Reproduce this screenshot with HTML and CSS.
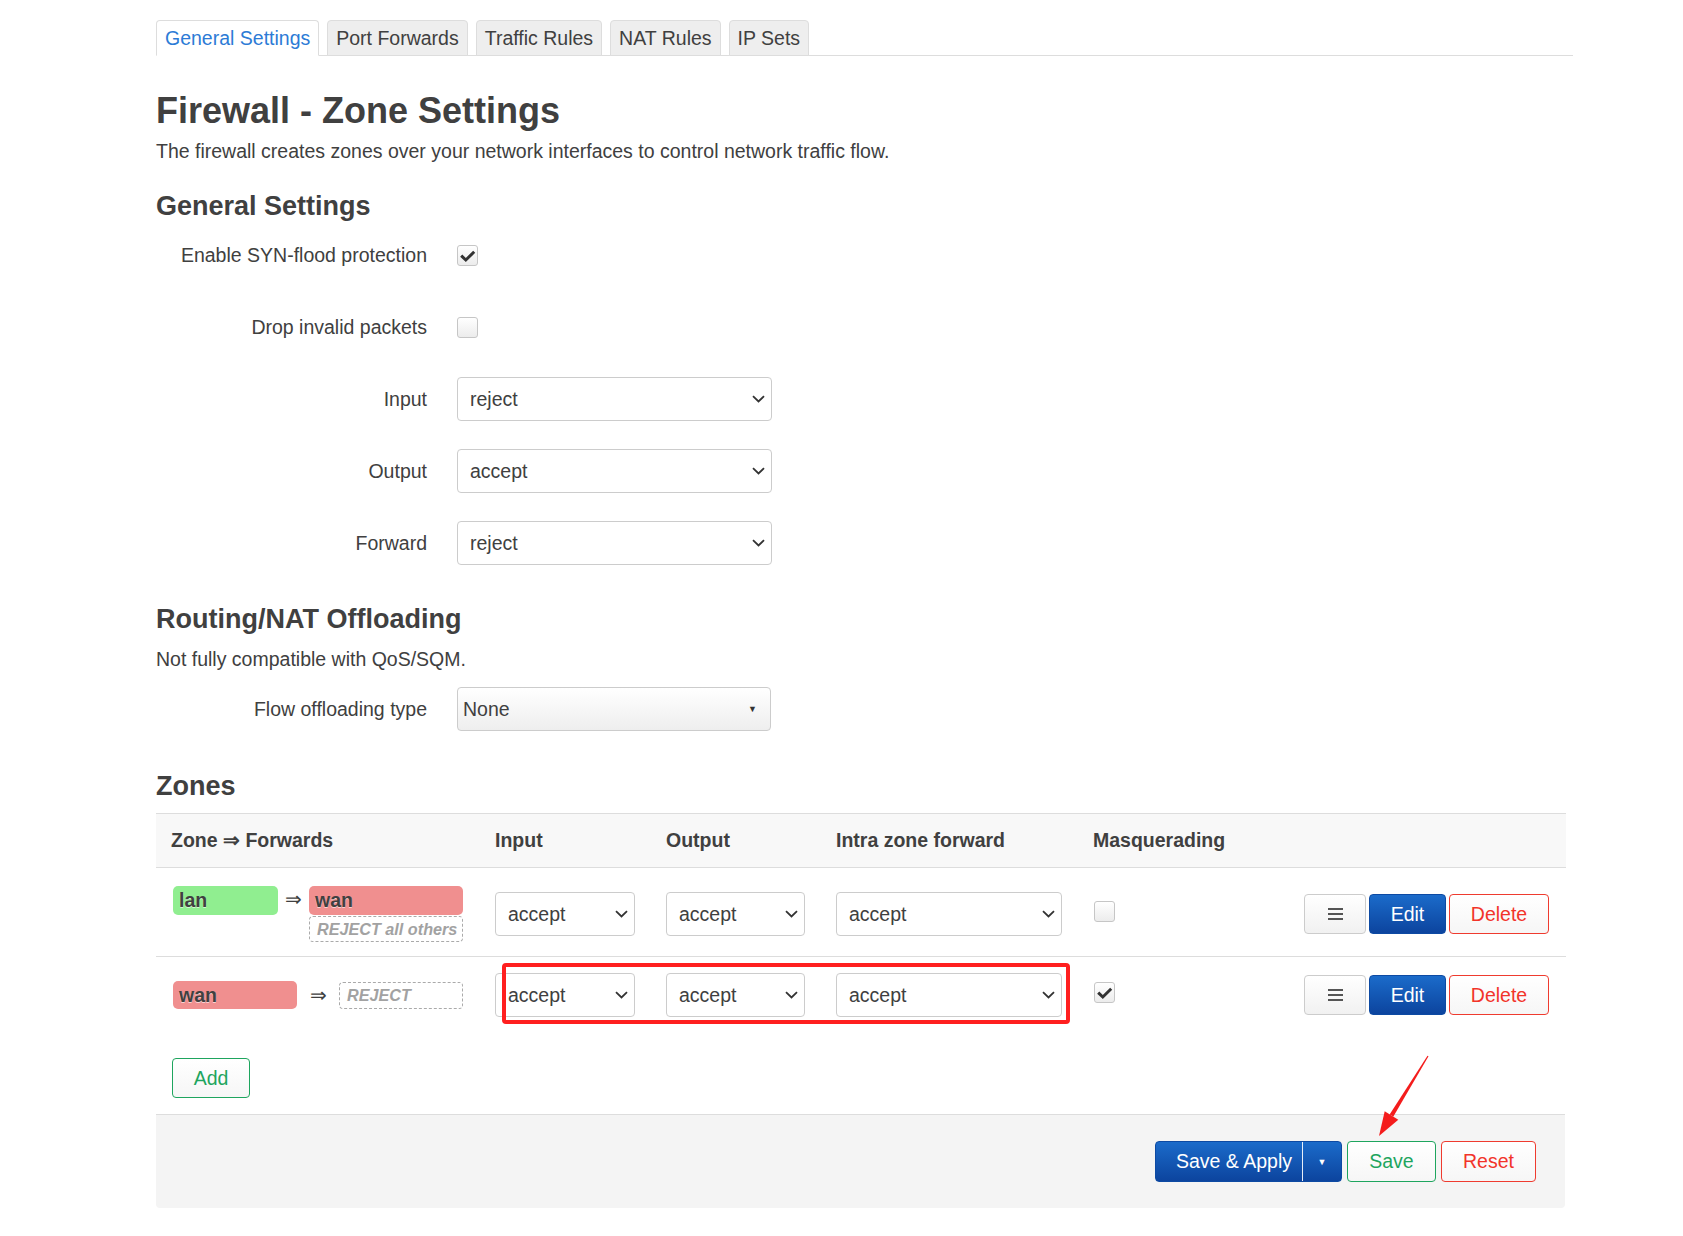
FILE: index.html
```html
<!DOCTYPE html>
<html>
<head>
<meta charset="utf-8">
<title>Firewall - Zone Settings</title>
<link rel="stylesheet" href="styles.css">
</head>
<body>
<div class="page">
  <ul class="tabs">
    <li class="tab active">General Settings</li>
    <li class="tab">Port Forwards</li>
    <li class="tab">Traffic Rules</li>
    <li class="tab">NAT Rules</li>
    <li class="tab">IP Sets</li>
  </ul>

  <h2 class="title">Firewall - Zone Settings</h2>
  <p class="desc">The firewall creates zones over your network interfaces to control network traffic flow.</p>

  <h3 class="section sec-general">General Settings</h3>
  <div class="fields">
    <div class="field">
      <div class="label">Enable SYN-flood protection</div>
      <span class="cb"><svg viewBox="0 0 21 21" width="21" height="21"><path d="M4.2 10.6 L8.8 15 L17.2 6.8" fill="none" stroke="#333" stroke-width="3" stroke-linejoin="miter"/></svg></span>
    </div>
    <div class="field">
      <div class="label">Drop invalid packets</div>
      <span class="cb"></span>
    </div>
    <div class="field">
      <div class="label">Input</div>
      <div class="select sel-form"><span>reject</span><svg class="chev" viewBox="0 0 13 8" width="13" height="8"><path d="M1 1.2 L6.5 6.5 L12 1.2" fill="none" stroke="#333" stroke-width="1.8"/></svg></div>
    </div>
    <div class="field">
      <div class="label">Output</div>
      <div class="select sel-form"><span>accept</span><svg class="chev" viewBox="0 0 13 8" width="13" height="8"><path d="M1 1.2 L6.5 6.5 L12 1.2" fill="none" stroke="#333" stroke-width="1.8"/></svg></div>
    </div>
    <div class="field">
      <div class="label">Forward</div>
      <div class="select sel-form"><span>reject</span><svg class="chev" viewBox="0 0 13 8" width="13" height="8"><path d="M1 1.2 L6.5 6.5 L12 1.2" fill="none" stroke="#333" stroke-width="1.8"/></svg></div>
    </div>
  </div>

  <h3 class="section sec-routing">Routing/NAT Offloading</h3>
  <p class="note">Not fully compatible with QoS/SQM.</p>
  <div class="field field-flow">
    <div class="label">Flow offloading type</div>
    <div class="select sel-plain"><span>None</span><span class="tri">&#9660;</span></div>
  </div>

  <h3 class="section sec-zones">Zones</h3>
  <div class="ztable">
    <div class="zrow zhead">
      <div class="hc">Zone &rArr; Forwards</div>
      <div class="hc">Input</div>
      <div class="hc">Output</div>
      <div class="hc">Intra zone forward</div>
      <div class="hc">Masquerading</div>
      <div class="hc"></div>
    </div>

    <div class="zrow zbody row1">
      <div class="zonecell">
        <span class="zbadge lan w105">lan</span>
        <span class="arrow a31">&rArr;</span>
        <div class="fwds">
          <span class="zbadge wan w154">wan</span>
          <span class="rej w154">REJECT all others</span>
        </div>
      </div>
      <div class="cell"><div class="select s140"><span>accept</span><svg class="chev" viewBox="0 0 13 8" width="13" height="8"><path d="M1 1.2 L6.5 6.5 L12 1.2" fill="none" stroke="#333" stroke-width="1.8"/></svg></div></div>
      <div class="cell"><div class="select s139"><span>accept</span><svg class="chev" viewBox="0 0 13 8" width="13" height="8"><path d="M1 1.2 L6.5 6.5 L12 1.2" fill="none" stroke="#333" stroke-width="1.8"/></svg></div></div>
      <div class="cell"><div class="select s226"><span>accept</span><svg class="chev" viewBox="0 0 13 8" width="13" height="8"><path d="M1 1.2 L6.5 6.5 L12 1.2" fill="none" stroke="#333" stroke-width="1.8"/></svg></div></div>
      <div class="cell masq"><span class="cb"></span></div>
      <div class="cell acts">
        <button class="btn btn-menu"><svg viewBox="0 0 15 12" width="15" height="12"><rect x="0" y="0" width="15" height="2" fill="#555"/><rect x="0" y="5" width="15" height="2" fill="#555"/><rect x="0" y="10" width="15" height="2" fill="#555"/></svg></button>
        <button class="btn btn-blue btn-edit">Edit</button>
        <button class="btn btn-red btn-del">Delete</button>
      </div>
    </div>

    <div class="zrow zbody row2">
      <div class="zonecell zc2">
        <span class="zbadge wan w124">wan</span>
        <span class="arrow a42">&rArr;</span>
        <span class="rej w124">REJECT</span>
      </div>
      <div class="cell"><div class="select s140"><span>accept</span><svg class="chev" viewBox="0 0 13 8" width="13" height="8"><path d="M1 1.2 L6.5 6.5 L12 1.2" fill="none" stroke="#333" stroke-width="1.8"/></svg></div></div>
      <div class="cell"><div class="select s139"><span>accept</span><svg class="chev" viewBox="0 0 13 8" width="13" height="8"><path d="M1 1.2 L6.5 6.5 L12 1.2" fill="none" stroke="#333" stroke-width="1.8"/></svg></div></div>
      <div class="cell"><div class="select s226"><span>accept</span><svg class="chev" viewBox="0 0 13 8" width="13" height="8"><path d="M1 1.2 L6.5 6.5 L12 1.2" fill="none" stroke="#333" stroke-width="1.8"/></svg></div></div>
      <div class="cell masq"><span class="cb"><svg viewBox="0 0 21 21" width="21" height="21"><path d="M4.2 10.6 L8.8 15 L17.2 6.8" fill="none" stroke="#333" stroke-width="3"/></svg></span></div>
      <div class="cell acts">
        <button class="btn btn-menu"><svg viewBox="0 0 15 12" width="15" height="12"><rect x="0" y="0" width="15" height="2" fill="#555"/><rect x="0" y="5" width="15" height="2" fill="#555"/><rect x="0" y="10" width="15" height="2" fill="#555"/></svg></button>
        <button class="btn btn-blue btn-edit">Edit</button>
        <button class="btn btn-red btn-del">Delete</button>
      </div>
    </div>
  </div>

  <div class="addrow"><button class="btn btn-green btn-add">Add</button></div>

  <div class="actions">
    <div class="split">
      <span class="split-main">Save &amp; Apply</span>
      <span class="split-drop">&#9660;</span>
    </div>
    <button class="btn btn-green btn-save">Save</button>
    <button class="btn btn-red btn-reset">Reset</button>
  </div>

  <div class="annot-box"></div>
  <svg class="annot-arrow" viewBox="0 0 80 95" width="80" height="95">
    <polygon points="68.5,6.3 67.5,5.7 29.6,64.4 33.4,66.6" fill="#f41c1c"/>
    <polygon points="19,86 24.7,61.3 38.3,69.7" fill="#f41c1c"/>
  </svg>
</div>
</body>
</html>
```

FILE: styles.css
```css
* { box-sizing: border-box; }

html, body {
  margin: 0;
  padding: 0;
  background: #fff;
}

body {
  font-family: "Liberation Sans", Arial, sans-serif;
  font-size: 19.5px;
  color: #404040;
}

.page {
  position: relative;
  margin-left: 156px;
  width: 1410px;
  padding-top: 20px;
  padding-bottom: 28px;
}

/* Tabs */
.tabs {
  list-style: none;
  margin: 0 -7px 0 0;
  padding: 0;
  display: flex;
  gap: 8px;
  height: 36px;
  border-bottom: 1px solid #ddd;
}

.tab {
  height: 36px;
  line-height: 34px;
  padding: 0 8px;
  border: 1px solid #ddd;
  border-radius: 4px 4px 0 0;
  background: #eee;
  color: #404040;
  white-space: nowrap;
}

.tab.active {
  background: #fff;
  border-bottom-color: #fff;
  color: #2c7bd6;
}

/* Headings */
.title {
  margin: 35px 0 0;
  font-size: 36px;
  line-height: 40px;
  font-weight: bold;
  color: #404040;
}

.desc {
  margin: 6px 0 0;
  line-height: 28px;
}

.section {
  margin: 0;
  font-size: 27px;
  line-height: 32px;
  font-weight: bold;
  color: #404040;
}

.sec-general { margin-top: 25px; }
.sec-routing { margin-top: 38px; }
.sec-zones { margin-top: 39px; }

.note {
  margin: 10px 0 0;
  line-height: 28px;
}

/* Form fields */
.fields {
  margin-top: 11px;
  display: flex;
  flex-direction: column;
  gap: 28px;
}

.field {
  display: flex;
  align-items: center;
  height: 44px;
}

.field-flow { margin-top: 14px; }

.label {
  width: 271px;
  text-align: right;
  margin-right: 30px;
  line-height: 44px;
  white-space: nowrap;
}

.cb {
  display: inline-flex;
  width: 21px;
  height: 21px;
  border: 1px solid #c6c6c6;
  border-radius: 3px;
  background: linear-gradient(#ffffff, #ececec);
  align-items: center;
  justify-content: center;
  overflow: hidden;
}

.cb svg {
  display: block;
  margin: -1px;
  flex: none;
}

.select {
  display: flex;
  align-items: center;
  justify-content: space-between;
  height: 44px;
  border: 1px solid #ccc;
  border-radius: 4px;
  background: #fff;
  padding: 0 6px 0 12px;
  color: #404040;
  white-space: nowrap;
}

.select .chev { display: block; flex: none; }

.sel-form { width: 315px; }

.sel-plain {
  width: 314px;
  padding: 0 13px 0 5px;
  background: linear-gradient(#ffffff, #eeeeee);
}

.sel-plain .tri {
  font-size: 9px;
  color: #333;
}

/* Zones table */
.ztable {
  margin-top: 11px;
}

.zrow {
  display: grid;
  grid-template-columns: 324px 171px 170px 257px 1fr auto;
  align-items: center;
}

.zhead {
  height: 55px;
  background: #f8f8f8;
  border-top: 1px solid #ddd;
  border-bottom: 1px solid #ddd;
  font-weight: bold;
}

.hc {
  padding-left: 15px;
  white-space: nowrap;
}

.row1 {
  padding: 18px 0 14px;
  border-bottom: 1px solid #ddd;
}

.row2 {
  padding: 16px 0 17px;
}

.zonecell {
  display: flex;
  align-items: flex-start;
  padding-left: 17px;
}

.zc2 { align-items: center; }

.zbadge {
  display: block;
  height: 29px;
  line-height: 29px;
  padding: 0 6px;
  border-radius: 5px;
  font-weight: bold;
  color: #404040;
  text-shadow: 0 1px 0 rgba(255,255,255,0.6);
}

.zc2 .zbadge { height: 28px; line-height: 28px; }

.lan { background: #90ee90; }
.wan { background: #f08f8f; }

.w105 { width: 105px; }
.w124 { width: 124px; }
.w154 { width: 154px; }

.arrow {
  display: block;
  text-align: center;
  line-height: 27px;
  font-size: 20px;
  color: #404040;
}

.a31 { width: 31px; }
.a42 { width: 42px; }

.fwds {
  display: flex;
  flex-direction: column;
  gap: 1px;
}

.rej {
  display: block;
  height: 26px;
  line-height: 24px;
  padding: 0 7px;
  border: 1px dashed #aaa;
  border-radius: 4px;
  font-size: 16.2px;
  font-weight: bold;
  font-style: italic;
  color: #a2a2a2;
  white-space: nowrap;
}

.zc2 .rej { height: 27px; line-height: 25px; }

.cell {
  padding-left: 15px;
}

.s140 { width: 140px; }
.s139 { width: 139px; }
.s226 { width: 226px; }

.masq {
  padding-left: 16px;
  margin-bottom: 6px;
  display: flex;
}

.acts {
  display: flex;
  gap: 3px;
  padding-right: 17px;
  padding-left: 0;
}

/* Buttons */
.btn {
  font-family: "Liberation Sans", Arial, sans-serif;
  font-size: 19.5px;
  height: 40px;
  border-radius: 4px;
  border: 1px solid #ccc;
  background: linear-gradient(#ffffff, #f1f1f1);
  color: #404040;
  padding: 0;
  margin: 0;
  display: inline-flex;
  align-items: center;
  justify-content: center;
  cursor: pointer;
}

.btn-menu { width: 62px; }
.btn-menu svg { display: block; }

.btn-blue {
  background: linear-gradient(#1b6bca, #0c449e);
  border-color: #0d4aa3;
  color: #fff;
}

.btn-edit { width: 77px; }

.btn-red {
  border-color: #ef3b2f;
  color: #f2342a;
  background: linear-gradient(#ffffff, #f6f6f6);
}

.btn-del { width: 100px; }

.btn-green {
  border-color: #1ea55e;
  color: #1ea55e;
  background: linear-gradient(#ffffff, #f6f6f6);
}

.addrow {
  margin-top: 24px;
  padding-left: 16px;
}

.btn-add { width: 78px; }

.actions {
  margin-top: 16px;
  background: #f4f4f4;
  border-top: 1px solid #ddd;
  border-radius: 0 0 4px 4px;
  padding: 26px 29px 26px 0;
  display: flex;
  justify-content: flex-end;
  gap: 5px;
  margin-right: 1px;
}

.split {
  display: flex;
  height: 41px;
  border-radius: 4px;
  background: linear-gradient(#1b6bca, #0c449e);
  border: 1px solid #0d4aa3;
  color: #fff;
  align-items: stretch;
}

.split-main {
  display: flex;
  align-items: center;
  padding: 0 10px 0 20px;
  border-right: 1px solid rgba(255,255,255,0.9);
  white-space: nowrap;
}

.split-drop {
  display: flex;
  align-items: center;
  justify-content: center;
  width: 38px;
  font-size: 9px;
}

.btn-save { width: 89px; height: 41px; }
.btn-reset { width: 95px; height: 41px; }

/* Annotations */
.annot-box {
  position: absolute;
  left: 346px;
  top: 963px;
  width: 568px;
  height: 61px;
  border: 4px solid #ff1f1f;
  border-radius: 4px;
}

.annot-arrow {
  position: absolute;
  left: 1204px;
  top: 1050px;
}
```
